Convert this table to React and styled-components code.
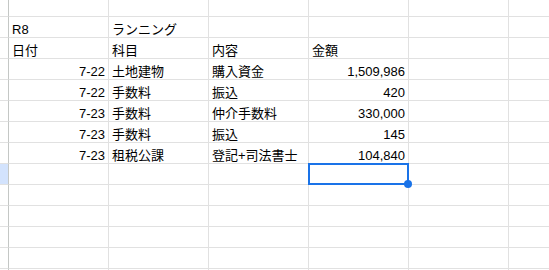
import React from "react";
import styled, { createGlobalStyle } from "styled-components";

const Global = createGlobalStyle`
  html, body { margin: 0; padding: 0; background: #fff; overflow: hidden; }
  body { font-family: "Liberation Sans", Arial, "Noto Sans CJK JP", sans-serif; }
`;

const Viewport = styled.div`
  width: 549px;
  height: 270px;
  overflow: hidden;
  background: #fff;
`;

const Sheet = styled.div`
  display: grid;
  grid-template-columns: 9px repeat(6, 100px);
  grid-auto-rows: 21px;
  margin-top: -4px;
`;

const RowHead = styled.div`
  box-sizing: border-box;
  border-right: 1px solid #c4c7c5;
  border-bottom: 1px solid #e1e1e1;
  background: ${(p) => (p.$active ? "#d3e3fd" : "#fff")};
`;

const Cell = styled.div`
  position: relative;
  box-sizing: border-box;
  border-right: 1px solid #e1e1e1;
  border-bottom: 1px solid #e1e1e1;
  display: flex;
  align-items: flex-end;
  justify-content: ${(p) => (p.$right ? "flex-end" : "flex-start")};
  padding: 0 3px 1px 3px;
  font-size: 13px;
  line-height: 13px;
  color: #000;
  white-space: nowrap;
  overflow: visible;
  z-index: ${(p) => (p.$selected ? 2 : 1)};
`;

const Selection = styled.div`
  position: absolute;
  left: -1px;
  top: -1px;
  right: -1px;
  bottom: -1px;
  border: 2px solid #1a73e8;
  pointer-events: none;
`;

const Handle = styled.div`
  position: absolute;
  right: -5px;
  bottom: -5px;
  width: 8px;
  height: 8px;
  border-radius: 50%;
  background: #1a73e8;
`;

const rows = [
  ["", "", "", "", "", ""],
  ["R8", "ランニング", "", "", "", ""],
  ["日付", "科目", "内容", "金額", "", ""],
  ["7-22", "土地建物", "購入資金", "1,509,986", "", ""],
  ["7-22", "手数料", "振込", "420", "", ""],
  ["7-23", "手数料", "仲介手数料", "330,000", "", ""],
  ["7-23", "手数料", "振込", "145", "", ""],
  ["7-23", "租税公課", "登記+司法書士", "104,840", "", ""],
  ["", "", "", "", "", ""],
  ["", "", "", "", "", ""],
  ["", "", "", "", "", ""],
  ["", "", "", "", "", ""],
  ["", "", "", "", "", ""],
  ["", "", "", "", "", ""],
];

const isNum = (r, c) => r >= 3 && (c === 0 || c === 3);

export default function App() {
  return (
    <Viewport>
      <Global />
      <Sheet>
        {rows.map((row, r) => (
          <React.Fragment key={r}>
            <RowHead $active={r === 8} />
            {row.map((v, c) => {
              const sel = r === 8 && c === 3;
              return (
                <Cell key={c} $right={isNum(r, c)} $selected={sel}>
                  {v}
                  {sel && (
                    <Selection>
                      <Handle />
                    </Selection>
                  )}
                </Cell>
              );
            })}
          </React.Fragment>
        ))}
      </Sheet>
    </Viewport>
  );
}
